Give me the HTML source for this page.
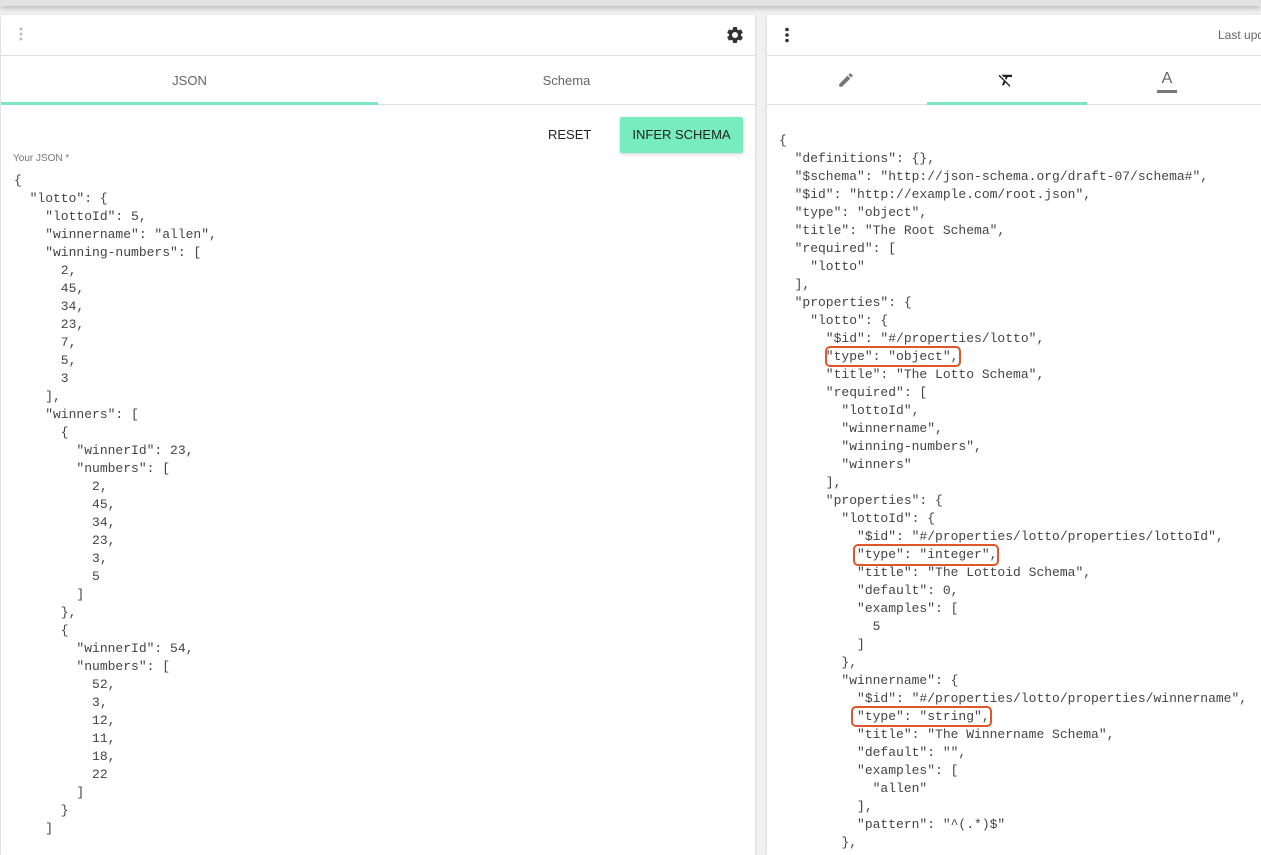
<!DOCTYPE html>
<html><head><meta charset="utf-8"><style>
*{margin:0;padding:0;box-sizing:border-box}
body{width:1261px;height:841px;overflow:hidden;background:#f1f1f1;font-family:"Liberation Sans",sans-serif;position:relative}
.topbar{position:absolute;left:0;top:0;width:1261px;height:6px;background:#e2e2e2;box-shadow:0 2px 6px rgba(0,0,0,.25)}
.panel{position:absolute;top:15px;background:#fff;height:840px;box-shadow:0 1px 3px rgba(0,0,0,.15)}
.hdr{height:41px;border-bottom:1px solid #e0e0e0;position:relative}
.tabs{height:49px;border-bottom:1px solid #e0e0e0;position:relative}
.tab{position:absolute;top:0;height:49px;line-height:49px;text-align:center;font-size:13px;color:#666}
.ind{position:absolute;bottom:-1px;height:3px;background:#7de8c0}
pre{position:absolute;font-family:"Liberation Mono",monospace;font-size:13px;line-height:18px;color:#444}
.box{position:absolute;border:2px solid #e0552a;border-radius:5px}
</style></head><body>
<div class="topbar"></div>
<div class="panel" style="left:1px;width:754px">
 <div class="hdr">
  <svg style="position:absolute;left:18px;top:11px" width="4" height="16"><circle cx="2" cy="3" r="1.5" fill="#bbb"/><circle cx="2" cy="8" r="1.5" fill="#bbb"/><circle cx="2" cy="13" r="1.5" fill="#bbb"/></svg>
  <svg style="position:absolute;left:724px;top:10px" width="20" height="20" viewBox="0 0 24 24"><path fill="#333" d="M19.14 12.94c.04-.3.06-.61.06-.94 0-.32-.02-.64-.07-.94l2.030-1.58a.49.49 0 0 0 .12-.61l-1.92-3.32a.49.49 0 0 0-.59-.22l-2.39.96c-.5-.38-1.03-.7-1.62-.94l-.36-2.54a.48.48 0 0 0-.48-.41h-3.84c-.24 0-.43.17-.47.41l-.36 2.54c-.59.24-1.13.57-1.62.94l-2.39-.96a.48.48 0 0 0-.59.22L2.74 8.87c-.12.21-.08.47.12.61l2.03 1.58c-.05.3-.09.63-.09.94s.02.64.07.94l-2.03 1.58a.49.49 0 0 0-.12.61l1.92 3.32c.12.22.37.29.59.22l2.39-.96c.5.38 1.03.7 1.62.94l.36 2.54c.05.24.24.41.48.41h3.84c.24 0 .44-.17.47-.41l.36-2.54c.59-.24 1.13-.56 1.62-.94l2.39.96c.22.08.47 0 .59-.22l1.92-3.32c.12-.22.07-.47-.12-.61l-2.01-1.58zM12 15.6A3.6 3.6 0 1 1 12 8.4a3.6 3.6 0 0 1 0 7.2z"/></svg>
 </div>
 <div class="tabs">
  <div class="tab" style="left:0;width:377px">JSON</div>
  <div class="tab" style="left:377px;width:377px">Schema</div>
  <div class="ind" style="left:0;width:377px"></div>
 </div>
 <div style="position:absolute;left:547px;top:112px;font-size:13px;color:#222">RESET</div>
 <div style="position:absolute;left:619px;top:102px;width:123px;height:36px;background:#77ecbf;border-radius:2px;box-shadow:0 1px 3px rgba(0,0,0,.2);font-size:13px;color:#222;text-align:center;line-height:36px">INFER SCHEMA</div>
 <div style="position:absolute;left:12px;top:138px;font-size:10px;color:#777">Your JSON *</div>
<pre style="left:13px;top:157px">{
  "lotto": {
    "lottoId": 5,
    "winnername": "allen",
    "winning-numbers": [
      2,
      45,
      34,
      23,
      7,
      5,
      3
    ],
    "winners": [
      {
        "winnerId": 23,
        "numbers": [
          2,
          45,
          34,
          23,
          3,
          5
        ]
      },
      {
        "winnerId": 54,
        "numbers": [
          52,
          3,
          12,
          11,
          18,
          22
        ]
      }
    ]</pre>
</div>
<div class="panel" style="left:767px;width:500px">
 <div class="hdr">
  <svg style="position:absolute;left:18px;top:12px" width="4" height="16"><circle cx="2" cy="2.5" r="1.8" fill="#333"/><circle cx="2" cy="8" r="1.8" fill="#333"/><circle cx="2" cy="13.5" r="1.8" fill="#333"/></svg>
  <div style="position:absolute;left:451px;top:13px;font-size:12px;color:#666;white-space:nowrap">Last updated</div>
 </div>
 <div class="tabs">
  <svg style="position:absolute;left:70px;top:15px" width="18" height="18" viewBox="0 0 24 24"><path fill="#777" d="M3 17.25V21h3.75L17.81 9.94l-3.75-3.75L3 17.25zM20.71 7.04a1 1 0 0 0 0-1.41l-2.34-2.34a1 1 0 0 0-1.41 0l-1.83 1.83 3.75 3.75 1.83-1.83z"/></svg>
  <svg style="position:absolute;left:230px;top:15px" width="18" height="18" viewBox="0 0 24 24"><path fill="#222" d="M3.27 5L2 6.27l6.97 6.97L6.5 19h3l1.57-3.66L16.73 21 18 19.73 3.55 5.27 3.27 5zM6 5v.18L8.82 8h2.4l-.72 1.68 2.1 2.1L14.21 8H20V5H6z"/></svg>
  <div style="position:absolute;left:390px;top:14px;width:20px;text-align:center;font-size:16px;color:#666">A</div>
  <div style="position:absolute;left:390px;top:34px;width:20px;height:3px;background:#777"></div>
  <div class="ind" style="left:160px;width:160px"></div>
 </div>
<pre style="left:12px;top:117px">{
  "definitions": {},
  "$schema": "http://json-schema.org/draft-07/schema#",
  "$id": "http://example.com/root.json",
  "type": "object",
  "title": "The Root Schema",
  "required": [
    "lotto"
  ],
  "properties": {
    "lotto": {
      "$id": "#/properties/lotto",
      "type": "object",
      "title": "The Lotto Schema",
      "required": [
        "lottoId",
        "winnername",
        "winning-numbers",
        "winners"
      ],
      "properties": {
        "lottoId": {
          "$id": "#/properties/lotto/properties/lottoId",
          "type": "integer",
          "title": "The Lottoid Schema",
          "default": 0,
          "examples": [
            5
          ]
        },
        "winnername": {
          "$id": "#/properties/lotto/properties/winnername",
          "type": "string",
          "title": "The Winnername Schema",
          "default": "",
          "examples": [
            "allen"
          ],
          "pattern": "^(.*)$"
        },</pre>
 <div class="box" style="left:58px;top:331px;width:136px;height:21px"></div>
 <div class="box" style="left:86px;top:529px;width:146px;height:22px"></div>
 <div class="box" style="left:84px;top:691px;width:141px;height:21px"></div>
</div>
</body></html>
